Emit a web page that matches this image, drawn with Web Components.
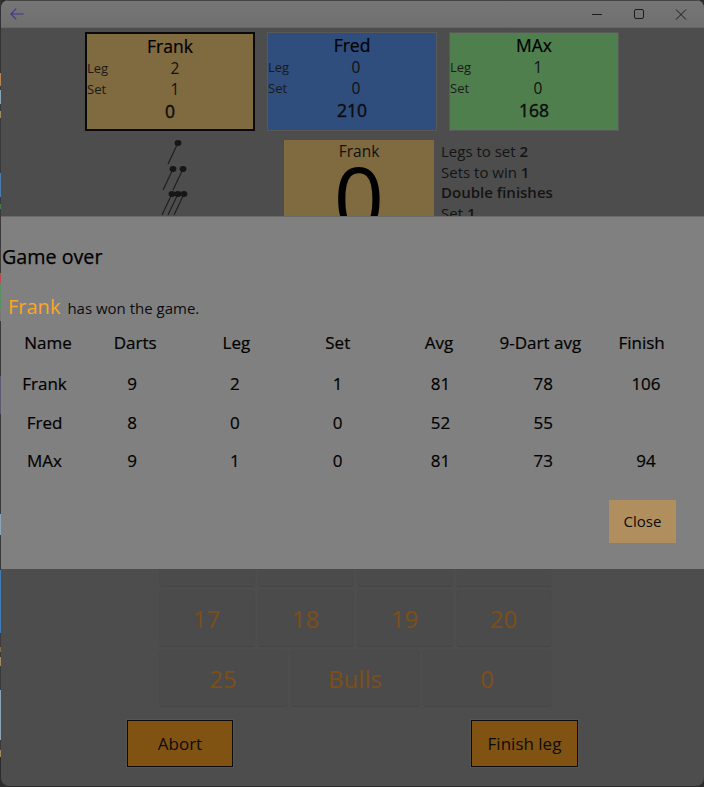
<!DOCTYPE html>
<html>
<head>
<meta charset="utf-8">
<style>
  html, body { margin: 0; height: 100%; background: #2c2c2c; }
  body {
    font-family: "Open Sans", sans-serif;
    overflow: hidden;
    /* bits of the desktop showing past the window's left edge */
    background: linear-gradient(to bottom,
      #333 0 73px, #b5814f 73px 86px, #3a3a3a 86px 90px, #8aa5b5 90px 104px, #3a3a3a 104px 111px,
      #a08a60 111px 118px, #3a3a3a 118px 173px, #4a7ab0 173px 197px, #3a3a3a 197px 204px,
      #4a7a4a 204px 209px, #3a3a3a 209px 273px, #b05050 273px 283px, #5a9060 283px 309px,
      #777 309px 321px, #3a3a3a 321px 376px, #5f5870 376px 414px, #3a3a3a 414px 514px,
      #8aa5b5 514px 535px, #3a3a3a 535px 570px, #3f7cb5 570px 633px, #3a3a3a 633px 647px,
      #8a6a40 647px 652px, #3a3a3a 652px 657px, #a08a60 657px 666px, #3a3a3a 666px 690px,
      #8aa5b5 690px 740px, #3a3a3a 740px 750px, #a08a60 750px 757px, #2c2c2c 757px) 0 0 / 1px 100% no-repeat #2c2c2c;
  }
</style>
</head>
<body>
<darts-window>
  <player-row>
    <player-card name="Frank" leg="2" set="1" score="0" color="#806a3f" active></player-card>
    <player-card name="Fred" leg="0" set="0" score="210" color="#2f4d7d"></player-card>
    <player-card name="MAx" leg="1" set="0" score="168" color="#4f7f4d"></player-card>
  </player-row>
  <turn-panel name="Frank" score="0"></turn-panel>
  <score-pad></score-pad>
  <action-bar></action-bar>
  <game-over slot="overlay"></game-over>
</darts-window>

<script>
(function() {
  class DartsWindow extends HTMLElement {
    constructor() {
      super()
      const shadow = this.attachShadow({ mode: 'open' })
      shadow.innerHTML = `
        <style>
          :host {
            display: flex;
            flex-direction: column;
            position: relative;
            box-sizing: border-box;
            width: 703px;
            height: 786px;
            margin-left: 1px;
            border-radius: 8px;
            overflow: hidden;
            background: #4d4d4d;
            color: #000;
          }
          .title {
            flex: none;
            height: 28px;
            display: flex;
            align-items: center;
            justify-content: space-between;
            background: linear-gradient(#767676, #6f6f6f);
            border-bottom: 1px solid #666;
            box-shadow: inset 0 1px 0 #444;
            box-sizing: border-box;
          }
          .back { margin-left: 9px; display: flex; }
          .controls { display: flex; margin-right: 2px; }
          .controls svg { display: block; width: 42px; height: 27px; }
          .main {
            flex: 1;
            display: flex;
            flex-direction: column;
            min-height: 0;
          }
        </style>
        <div class='title'>
          <span class='back'>
            <svg width='14' height='12' viewBox='0 0 14 12' fill='none' stroke='#3c3690' stroke-width='1.1'>
              <path d='M13.5 6H1M6.2.6 .9 6l5.3 5.4'/>
            </svg>
          </span>
          <span class='controls'>
            <svg viewBox='0 0 42 27' fill='none' stroke='#1c1c1c' stroke-width='1'><path d='M16 14.5h10'/></svg>
            <svg viewBox='0 0 42 27' fill='none' stroke='#1c1c1c' stroke-width='1'><rect x='16.5' y='9.5' width='9' height='9' rx='1.5'/></svg>
            <svg viewBox='0 0 42 27' fill='none' stroke='#1c1c1c' stroke-width='1'><path d='M16 9.5l10 10M26 9.5l-10 10'/></svg>
          </span>
        </div>
        <div class='main'><slot></slot></div>
        <slot name='overlay'></slot>
      `
    }
  }

  class PlayerRow extends HTMLElement {
    constructor() {
      super()
      this.attachShadow({ mode: 'open' }).innerHTML = `
        <style>
          :host {
            display: flex;
            justify-content: center;
            gap: 12px;
            padding: 4px 0 0 0;
            margin-left: -1px;
          }
        </style>
        <slot></slot>
      `
    }
  }

  class PlayerCard extends HTMLElement {
    constructor() {
      super()
      const active = this.hasAttribute('active')
      this.attachShadow({ mode: 'open' }).innerHTML = `
        <style>
          :host {
            display: block;
            box-sizing: border-box;
            width: 170px;
            height: 99px;
            background: ${this.getAttribute('color')};
            border: ${active ? '2px solid #0a0a0a' : '1px solid #595959'};
          }
          .name { text-align: center; font-size: 17.5px; line-height: 22px; margin-top: 1px; -webkit-text-stroke: .2px #000; }
          .line { display: grid; grid-template-columns: 1fr; height: 20.5px; align-items: center; }
          .label { font-size: 13px; color: #1a1a1a; grid-area: 1/1; }
          .val { font-size: 15.5px; color: #111; grid-area: 1/1; text-align: center; padding-left: ${active ? '10px' : '8px'}; }
          .score { text-align: center; font-size: 17.5px; line-height: 24px; color: #0c0c0c; margin-top: 1px; -webkit-text-stroke: .4px #0c0c0c; }
        </style>
        <div class='name'>${this.getAttribute('name')}</div>
        <div class='line'><span class='label'>Leg</span><span class='val'>${this.getAttribute('leg')}</span></div>
        <div class='line'><span class='label'>Set</span><span class='val'>${this.getAttribute('set')}</span></div>
        <div class='score'>${this.getAttribute('score')}</div>
      `
    }
  }

  const dart = (x, y) => `
    <g transform='translate(${x} ${y})'>
      <ellipse cx='0' cy='0' rx='3.4' ry='3' fill='#161616'/>
      <path d='M-1 2 -10 21' stroke='#1c1c1c' stroke-width='1.1'/>
    </g>`

  class TurnPanel extends HTMLElement {
    constructor() {
      super()
      this.attachShadow({ mode: 'open' }).innerHTML = `
        <style>
          :host {
            display: flex;
            height: 100px;
            margin-top: 9px;
          }
          .darts { width: 283px; flex: none; }
          .darts svg { display: block; margin-left: 150px; }
          .current {
            width: 150px;
            height: 100px;
            flex: none;
            background: #806a3f;
            text-align: center;
          }
          .who { font-size: 15.5px; line-height: 20px; color: #111; margin-top: 1px; }
          .big { font-size: 88px; line-height: 72px; color: #000; }
          .info { margin-left: 7px; padding-top: 1px; font-size: 15px; line-height: 20.7px; color: #141414; }
          .info div { white-space: nowrap; }
          b { font-weight: 600; }
        </style>
        <div class='darts'>
          <svg width='60' height='80' viewBox='0 0 60 80'>
            ${dart(27, 3)}
            ${dart(22, 29)}${dart(32, 29)}
            ${dart(21, 54)}${dart(27, 54)}${dart(33, 54)}
          </svg>
        </div>
        <div class='current'>
          <div class='who'>${this.getAttribute('name')}</div>
          <div class='big'>${this.getAttribute('score')}</div>
        </div>
        <div class='info'>
          <div>Legs to set <b>2</b></div>
          <div>Sets to win <b>1</b></div>
          <div><b>Double finishes</b></div>
          <div>Set <b>1</b></div>
        </div>
      `
    }
  }

  class ScorePad extends HTMLElement {
    constructor() {
      super()
      const row = vals => `
        <div class='row'>${vals.map(v => `<button>${v}</button>`).join('')}</div>`
      this.attachShadow({ mode: 'open' }).innerHTML = `
        <style>
          :host {
            display: flex;
            flex-direction: column;
            gap: 3px;
            width: 393px;
            margin: auto 0 0 158px;
          }
          .row { display: flex; gap: 3px; height: 57px; }
          button {
            flex: 1 1 0;
            min-width: 0;
            padding: 0 1px 0 0;
            font: 400 24px "Open Sans", sans-serif;
            color: #7d4f18;
            background: #4b4b4b;
            border: 1px solid #4a4a4a;
            border-bottom-color: #454545;
            border-radius: 4px;
          }
        </style>
        ${row([13, 14, 15, 16])}
        ${row([17, 18, 19, 20])}
        ${row([25, 'Bulls', 0])}
      `
    }
  }

  class ActionBar extends HTMLElement {
    constructor() {
      super()
      this.attachShadow({ mode: 'open' }).innerHTML = `
        <style>
          :host {
            display: flex;
            justify-content: space-between;
            padding: 13px 126px 19px 126px;
          }
          button {
            box-sizing: border-box;
            width: 106px;
            height: 47px;
            font: 400 17px "Open Sans", sans-serif;
            color: #0c0c0c;
            background: #805313;
            border: 1px solid #0c0c0c;
            outline: 1px solid #555;
            padding: 0;
          }
          button.wide { width: 107px; }
        </style>
        <button>Abort</button>
        <button class='wide'>Finish leg</button>
      `
    }
  }

  const results = [
    ['Frank', 9, 2, 1, 81, 78, 106],
    ['Fred', 8, 0, 0, 52, 55, ''],
    ['MAx', 9, 1, 0, 81, 73, 94]
  ]

  class GameOver extends HTMLElement {
    constructor() {
      super()
      this.attachShadow({ mode: 'open' }).innerHTML = `
        <style>
          :host {
            position: absolute;
            left: 0;
            right: 0;
            top: 217px;
            height: 352px;
            background: #808080;
            box-shadow: 0 -1px 0 #6a6a6a;
            color: #000;
            display: flex;
            flex-direction: column;
          }
          h2 { font-size: 19.7px; font-weight: 400; line-height: 24px; margin: 28px 0 0 1px; -webkit-text-stroke: .25px #000; }
          .won { display: flex; align-items: baseline; margin: 24px 0 0 7px; font-size: 15px; color: #0c0c0c; line-height: 28px; }
          .won span { font-size: 20px; color: #fca629; margin-right: 7px; }
          .grid { display: grid; justify-items: center; font-size: 17px; line-height: 24px; -webkit-text-stroke: .2px #000; }
          .head { grid-template-columns: 83.5px repeat(6, 101.3px); margin-top: 9px; }
          .head div:first-child { padding-left: 10.5px; }
          .rows { grid-template-columns: 79.6px repeat(6, 102.8px); margin-top: 17px; row-gap: 14.5px; }
          .rows div:nth-child(7n + 1) { padding-left: 7.4px; }
          .foot { display: flex; justify-content: flex-end; margin-top: 26.5px; padding-right: 28px; }
          button {
            width: 67px;
            height: 43px;
            padding: 0;
            border: 0;
            background: #b08e5e;
            color: #0c0c0c;
            font: 400 15px "Open Sans", sans-serif;
          }
        </style>
        <h2>Game over</h2>
        <div class='won'><span>Frank</span>has won the game.</div>
        <div class='grid head'>
          ${['Name', 'Darts', 'Leg', 'Set', 'Avg', '9-Dart avg', 'Finish'].map(h => `<div>${h}</div>`).join('')}
        </div>
        <div class='grid rows'>
          ${results.map(r => r.map(v => `<div>${v}</div>`).join('')).join('')}
        </div>
        <div class='foot'><button>Close</button></div>
      `
    }
  }

  customElements.define('darts-window', DartsWindow)
  customElements.define('player-row', PlayerRow)
  customElements.define('player-card', PlayerCard)
  customElements.define('turn-panel', TurnPanel)
  customElements.define('score-pad', ScorePad)
  customElements.define('action-bar', ActionBar)
  customElements.define('game-over', GameOver)
})()
</script>
</body>
</html>
